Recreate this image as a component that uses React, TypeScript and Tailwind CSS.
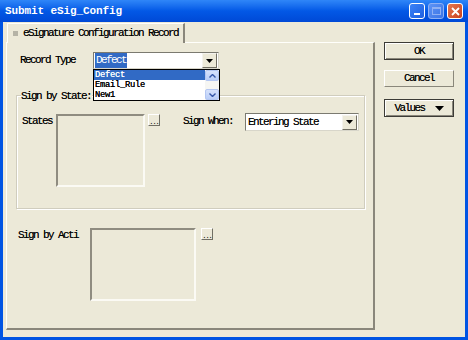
import React from "react";

const F = "font-['Liberation_Mono',monospace] text-[11px] tracking-[-1.6px] text-black leading-none whitespace-nowrap [text-shadow:0_0_0.4px_rgba(0,0,0,0.6)]";
const FW = "font-['Liberation_Mono',monospace] text-[11px] tracking-[-1.6px] text-white leading-none whitespace-nowrap";
const FL = "font-['Liberation_Mono',monospace] text-[8.8px] tracking-[-0.28px] leading-[9px] whitespace-nowrap [text-shadow:0_0_0.4px_currentColor]";

function ArrowBtn() {
  return (
    <div className="w-[15px] h-[15px] bg-[#ece9d8] border border-t-[#f4f3ee] border-l-[#f4f3ee] border-b-[#716f64] border-r-[#716f64] flex items-center justify-center">
      <svg width="7" height="4" viewBox="0 0 7 4"><path d="M0 0h7L3.5 4z" fill="#000" /></svg>
    </div>
  );
}

function Sunken({ w, h }: { w: number; h: number }) {
  return (
    <div
      className="border-2 border-t-[#8f8c80] border-l-[#8f8c80] border-b-[#fbfaf4] border-r-[#fbfaf4] bg-[#ece9d8]"
      style={{ width: w, height: h }}
    />
  );
}

function DotBtn() {
  return (
    <div className="w-[12px] h-[12px] bg-[#ece9d8] border border-t-[#fff] border-l-[#fff] border-b-[#716f64] border-r-[#716f64] flex items-end justify-center">
      <span className="text-[7px] leading-[6px] font-['Liberation_Mono',monospace] tracking-[-1px]">...</span>
    </div>
  );
}

function XpScrollBtn({ up }: { up: boolean }) {
  return (
    <div className="w-[14px] h-[11px] rounded-[2px] bg-gradient-to-b from-[#d6e2fc] to-[#b9cdf7] border border-[#b3c6f2] flex items-center justify-center">
      <svg width="7" height="4" viewBox="0 0 7 4">
        <path d={up ? "M0.5 3.5L3.5 0.5L6.5 3.5" : "M0.5 0.5L3.5 3.5L6.5 0.5"} stroke="#3556a8" strokeWidth="1.4" fill="none" />
      </svg>
    </div>
  );
}

export default function App() {
  return (
    <div className="w-[468px] h-[340px] bg-[#0054e3] flex flex-col overflow-hidden">
      {/* title bar */}
      <div className="h-[22px] flex items-center pl-[5px] pr-[5px] bg-gradient-to-b from-[#2f86f8] via-[#0358e6] to-[#0049d6]">
        <span className="font-['Liberation_Mono',monospace] font-bold text-[11px] text-white tracking-[-0.1px] leading-none">Submit eSig_Config</span>
        <div className="ml-auto flex gap-[3px]">
          <div className="w-[16px] h-[16px] rounded-[3px] border border-white bg-gradient-to-br from-[#3c83f8] to-[#1e5fdf] flex items-end justify-center pb-[3px]">
            <div className="w-[6px] h-[2px] bg-white" />
          </div>
          <div className="w-[16px] h-[16px] rounded-[3px] border border-[#8fb0f4] bg-gradient-to-br from-[#5d93f5] to-[#3c74e6] flex items-center justify-center">
            <div className="w-[9px] h-[8px] border border-[#8fb0f4] border-t-2" />
          </div>
          <div className="w-[16px] h-[16px] rounded-[3px] border border-white bg-gradient-to-br from-[#e8774f] to-[#c8401c] flex items-center justify-center">
            <svg width="9" height="9" viewBox="0 0 9 9"><path d="M1 1L8 8M8 1L1 8" stroke="#fff" strokeWidth="1.8" /></svg>
          </div>
        </div>
      </div>

      {/* client */}
      <div className="flex-1 mx-[3px] mb-[3px] bg-[#ece9d8] flex pt-[1px] pl-[3px]">
        {/* tab control */}
        <div className="w-[369px] flex flex-col">
          <div className="flex">
            <div className="ml-[1px] w-[178px] h-[20px] bg-[#ece9d8] border-t border-l border-[#fffffb] border-r-2 border-r-[#8a877b] -mb-[1px] relative z-10 flex items-center pl-[5px] gap-[5px]">
              <div className="w-[5px] h-[5px] bg-[#b5b3a6]" />
              <span className={F}>eSignature Configuration Record</span>
            </div>
          </div>
          <div className="relative w-[369px] h-[288px] border-t border-l border-t-[#fffffb] border-l-[#fffffb] border-r-2 border-b-2 border-r-[#8a877b] border-b-[#8a877b] flex flex-col">
            {/* record type row */}
            <div className="relative flex items-center ml-[13px] mt-[9px] h-[17px]">
              <span className={`${F} w-[73px]`}>Record Type</span>
              <div className="w-[126px] h-[17px] bg-white border border-t-[#7b7a70] border-l-[#7b7a70] border-b-[#d8d6ca] border-r-[#d8d6ca] flex items-center pl-[1px] pr-[1px]">
                <span className={`${FW} bg-[#316ac5] px-[1px] py-[2px]`}>Defect</span>
                <div className="ml-auto"><ArrowBtn /></div>
              </div>
              {/* dropdown popup */}
              <div className="absolute left-[73px] top-[17px] w-[127px] h-[32px] bg-white border border-black z-20 flex">
                <div className="flex-1 flex flex-col">
                  <div className="h-[10px] bg-[#316ac5] flex items-center pl-[1px] overflow-hidden"><span className={`${FL} text-white`}>Defect</span></div>
                  <div className="h-[10px] flex items-center pl-[1px] overflow-hidden"><span className={`${FL} text-black`}>Email_Rule</span></div>
                  <div className="h-[10px] flex items-center pl-[1px] overflow-hidden"><span className={`${FL} text-black`}>New1</span></div>
                </div>
                <div className="w-[14px] flex flex-col justify-between bg-[#f6f6f3]">
                  <XpScrollBtn up />
                  <XpScrollBtn up={false} />
                </div>
              </div>
            </div>

            {/* Sign by State group */}
            <div className="relative ml-[9px] mt-[26px] w-[349px] h-[114px] border border-[#d0cdbe] shadow-[inset_1px_1px_0_#fff,1px_1px_0_#fff] flex flex-col">
              <span className={`${F} absolute left-[4px] -top-[5px] bg-[#ece9d8] pr-[1px]`}>Sign by State:</span>
              <div className="flex items-start mt-[18px] ml-[5px]">
                <span className={`${F} w-[34px] mt-[2px]`}>States</span>
                <Sunken w={89} h={73} />
                <div className="ml-[3px]"><DotBtn /></div>
                <span className={`${F} ml-[23px] w-[62px] mt-[2px]`}>Sign When:</span>
                <div className="-mt-[1px] w-[114px] h-[18px] bg-white border border-t-[#7b7a70] border-l-[#7b7a70] border-b-[#d8d6ca] border-r-[#d8d6ca] flex items-center pl-[2px] pr-[1px]">
                  <span className={F}>Entering State</span>
                  <div className="ml-auto"><ArrowBtn /></div>
                </div>
              </div>
            </div>

            {/* Sign by Acti */}
            <div className="flex items-start ml-[11px] mt-[19px]">
              <span className={`${F} w-[72px] mt-[2px]`}>Sign by Acti</span>
              <Sunken w={106} h={73} />
              <div className="ml-[5px]"><DotBtn /></div>
            </div>
          </div>
        </div>

        {/* right buttons */}
        <div className="ml-[9px] mt-[19px] flex flex-col">
          <div className="w-[70px] h-[18px] border border-[#3c3b36] bg-[#ece9d8] shadow-[inset_1px_1px_0_#fff,inset_-1px_-1px_0_#8a877b] flex items-center justify-center">
            <span className={F}>OK</span>
          </div>
          <div className="mt-[10px] w-[70px] h-[17px] border border-t-[#fff] border-l-[#fff] border-b-[#8a877b] border-r-[#8a877b] bg-[#ece9d8] flex items-center justify-center">
            <span className={F}>Cancel</span>
          </div>
          <div className="mt-[12px] w-[70px] h-[18px] border border-[#3c3b36] bg-[#ece9d8] shadow-[inset_1px_1px_0_#fff,inset_-1px_-1px_0_#8a877b] flex items-center justify-center gap-[10px]">
            <span className={F}>Values</span>
            <svg width="9" height="5" viewBox="0 0 9 5"><path d="M0 0h9L4.5 5z" fill="#000" /></svg>
          </div>
        </div>
      </div>
    </div>
  );
}
